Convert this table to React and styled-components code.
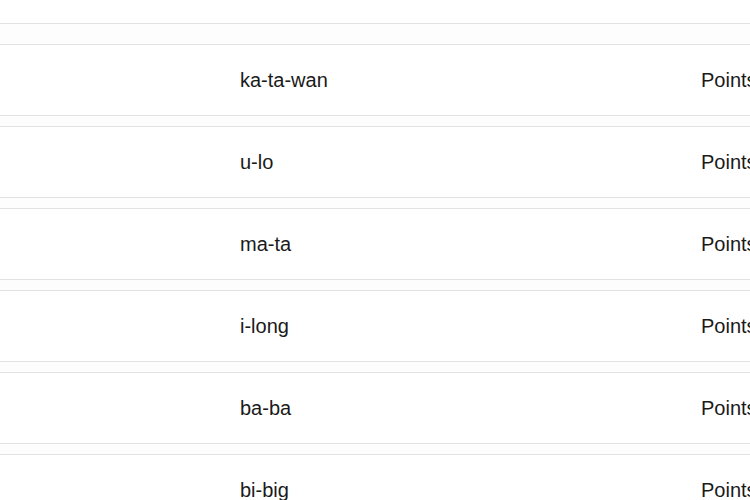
import React from 'react'
import styled, { createGlobalStyle } from 'styled-components'

const GlobalStyle = createGlobalStyle`
  html, body {
    margin: 0;
    padding: 0;
    background: #fdfdfd;
    overflow: hidden;
  }
  body {
    font-family: "Liberation Sans", Arial, sans-serif;
    color: #1a1a1a;
  }
`

const Page = styled.div`
  width: 750px;
  height: 500px;
  overflow: hidden;
`

const List = styled.div`
  width: 900px;
  display: flex;
  flex-direction: column;
`

const TopEdge = styled.div`
  height: 23px;
  background: #fff;
  border-bottom: 1px solid #e2e2e2;
  margin-bottom: 20px;
`

const Row = styled.div`
  display: grid;
  grid-template-columns: 240px 461px 1fr;
  align-items: center;
  height: 70px;
  background: #fff;
  border-top: 1px solid #e2e2e2;
  border-bottom: 1px solid #e2e2e2;
  margin-bottom: 10px;
`

const Cell = styled.div`
  font-size: 20px;
  white-space: nowrap;
`

const words = ['ka-ta-wan', 'u-lo', 'ma-ta', 'i-long', 'ba-ba', 'bi-big']

export default function App() {
  return (
    <Page>
      <GlobalStyle />
      <List>
        <TopEdge />
        {words.map((w) => (
          <Row key={w}>
            <Cell />
            <Cell>{w}</Cell>
            <Cell>Points</Cell>
          </Row>
        ))}
      </List>
    </Page>
  )
}
